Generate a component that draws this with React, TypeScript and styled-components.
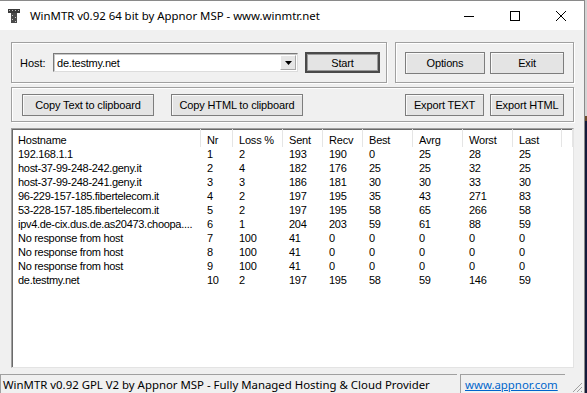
import React from 'react';
import styled, { createGlobalStyle } from 'styled-components';

const GlobalStyle = createGlobalStyle`
  html, body {
    margin: 0;
    padding: 0;
  }
  body {
    width: 587px;
    height: 393px;
    overflow: hidden;
    background: linear-gradient(
      to bottom,
      #d4d4d4 0,
      #d4d4d4 116px,
      #6b4a2a 116px,
      #6b4a2a 121px,
      #141a3a 121px
    );
    font-family: 'Liberation Sans', Arial, sans-serif;
  }
`;

const Window = styled.div`
  width: 585px;
  height: 393px;
  box-sizing: border-box;
  display: flex;
  flex-direction: column;
  background: #f0f0f0;
  border-top: 1px solid #8a8a8a;
  border-right: 1px solid #8a8a8a;
`;

const TitleBar = styled.div`
  flex: 0 0 29px;
  display: flex;
  align-items: center;
  background: #fff;
`;

const AppIcon = styled.svg`
  margin-left: 8px;
  flex: 0 0 auto;
`;

const Title = styled.span`
  flex: 1;
  margin-left: 10px;
  font-family: 'Noto Sans', 'Liberation Sans', sans-serif;
  font-size: 11.4px;
  color: #000;
  white-space: nowrap;
`;

const CaptionButton = styled.div`
  width: 46px;
  height: 29px;
  display: flex;
  align-items: center;
  justify-content: center;
`;

const Client = styled.div`
  flex: 1;
  display: flex;
  flex-direction: column;
  padding: 12px 10px 4px 11px;
  min-height: 0;
`;

const GroupBox = styled.div<{ $width: string; $height: number }>`
  box-sizing: border-box;
  width: ${({ $width }) => $width};
  height: ${({ $height }) => $height}px;
  display: flex;
  align-items: center;
  border: 1px solid #a0a0a0;
  box-shadow: inset 1px 1px 0 #fff, 1px 1px 0 #fff;
`;

const TopRow = styled.div`
  display: flex;
  gap: 8px;
`;

const HostGroup = styled(GroupBox)`
  padding-left: 8px;
`;

const ActionGroup = styled(GroupBox)`
  padding-left: 9px;
  gap: 5px;
`;

const ClipboardGroup = styled(GroupBox)`
  margin-top: 4px;
  padding: 0 9px 0 10px;
`;

const Label = styled.span`
  font-size: 11px;
  color: #000;
  width: 33px;
`;

const Combo = styled.div`
  box-sizing: border-box;
  width: 245px;
  height: 19px;
  display: flex;
  align-items: center;
  background: #fff;
  border: 1px solid #7a7a7a;
  border-right-color: #dcdcdc;
  border-bottom-color: #dcdcdc;
  box-shadow: inset 1px 1px 0 #c8c8c8;
`;

const ComboText = styled.span`
  flex: 1;
  padding-left: 3px;
  font-size: 11px;
  letter-spacing: -0.2px;
  color: #000;
`;

const ComboArrow = styled.div`
  box-sizing: border-box;
  width: 16px;
  height: 15px;
  margin-right: 1px;
  display: flex;
  align-items: center;
  justify-content: center;
  background: #e6e6e6;
  border: 1px solid #a8a8a8;
  border-top-color: #fff;
  border-left-color: #fff;
`;

const Button = styled.div<{ $width: number; $default?: boolean }>`
  box-sizing: border-box;
  width: ${({ $width }) => $width}px;
  height: 22px;
  display: flex;
  align-items: center;
  justify-content: center;
  background: #e4e4e4;
  border: ${({ $default }) => ($default ? '2px solid #4a4a4a' : '1px solid #7d7d7d')};
  box-shadow: ${({ $default }) => ($default ? 'inset 0 0 0 1px #9a9a9a' : 'inset 1px 1px 0 #fafafa')};
  font-size: 11px;
  letter-spacing: -0.15px;
  color: #000;
  white-space: nowrap;
`;

const StartButton = styled(Button)`
  margin-left: 7px;
  height: 21px;
`;

const Spacer = styled.div`
  flex: 1;
`;

const List = styled.div`
  box-sizing: border-box;
  margin-top: 6px;
  flex: 1;
  background: #fff;
  border: 1px solid #a0a0a0;
  border-right-color: #e3e3e3;
  border-bottom-color: #e3e3e3;
  box-shadow: inset 1px 1px 0 #6a6a6a;
  overflow: hidden;
`;

const COLUMNS = '189px 32px 50px 40px 40px 50px 50px 50px 49px 1fr';

const HeaderRow = styled.div`
  display: grid;
  grid-template-columns: ${COLUMNS};
  height: 18px;
`;

const HeaderCell = styled.div`
  box-sizing: border-box;
  display: flex;
  align-items: center;
  padding: 3px 0 0 6px;
  border-right: 1px solid #e5e5e5;
  font-size: 11px;
  letter-spacing: -0.2px;
  color: #000;
`;

const Row = styled.div`
  display: grid;
  grid-template-columns: ${COLUMNS};
  height: 14px;
  line-height: 14px;
`;

const Cell = styled.div`
  padding-left: 6px;
  font-size: 11px;
  letter-spacing: -0.3px;
  color: #000;
  white-space: nowrap;
  overflow: hidden;
`;

const StatusBar = styled.div`
  flex: 0 0 21px;
  display: flex;
  align-items: flex-end;
`;

const Pane = styled.div<{ $width: number }>`
  box-sizing: border-box;
  width: ${({ $width }) => $width}px;
  height: 19px;
  margin-right: 3px;
  padding-left: 2px;
  display: flex;
  align-items: center;
  border-top: 1px solid #a0a0a0;
  border-left: 1px solid #a0a0a0;
  font-family: 'Noto Sans', 'Liberation Sans', sans-serif;
  font-size: 11.4px;
  color: #000;
  white-space: nowrap;
  overflow: hidden;
`;

const Link = styled.span`
  padding-left: 2px;
  color: #0066cc;
  text-decoration: underline;
`;

const Grip = styled.svg`
  margin-left: auto;
  margin-right: 1px;
`;

const headers = ['Hostname', 'Nr', 'Loss %', 'Sent', 'Recv', 'Best', 'Avrg', 'Worst', 'Last'];

const hops: string[][] = [
  ['192.168.1.1', '1', '2', '193', '190', '0', '25', '28', '25'],
  ['host-37-99-248-242.geny.it', '2', '4', '182', '176', '25', '25', '32', '25'],
  ['host-37-99-248-241.geny.it', '3', '3', '186', '181', '30', '30', '33', '30'],
  ['96-229-157-185.fibertelecom.it', '4', '2', '197', '195', '35', '43', '271', '83'],
  ['53-228-157-185.fibertelecom.it', '5', '2', '197', '195', '58', '65', '266', '58'],
  ['ipv4.de-cix.dus.de.as20473.choopa....', '6', '1', '204', '203', '59', '61', '88', '59'],
  ['No response from host', '7', '100', '41', '0', '0', '0', '0', '0'],
  ['No response from host', '8', '100', '41', '0', '0', '0', '0', '0'],
  ['No response from host', '9', '100', '41', '0', '0', '0', '0', '0'],
  ['de.testmy.net', '10', '2', '197', '195', '58', '59', '146', '59'],
];

const App: React.FC = () => (
  <>
    <GlobalStyle />
    <Window>
      <TitleBar>
        <AppIcon width="12" height="14" viewBox="0 0 12 14">
          <rect x="0" y="0" width="12" height="4" fill="#3a3a3a" />
          <rect x="1" y="1" width="1" height="1" fill="#bdbdbd" />
          <rect x="4" y="1" width="1" height="1" fill="#bdbdbd" />
          <rect x="7" y="1" width="1" height="1" fill="#bdbdbd" />
          <rect x="10" y="1" width="1" height="1" fill="#bdbdbd" />
          <rect x="3" y="4" width="6" height="10" fill="#4a4a4a" />
          <rect x="4" y="6" width="1" height="1" fill="#c8c8c8" />
          <rect x="7" y="8" width="1" height="1" fill="#c8c8c8" />
          <rect x="4" y="10" width="1" height="1" fill="#c8c8c8" />
          <rect x="7" y="12" width="1" height="1" fill="#c8c8c8" />
        </AppIcon>
        <Title>WinMTR v0.92 64 bit by Appnor MSP - www.winmtr.net</Title>
        <CaptionButton>
          <svg width="10" height="10" viewBox="0 0 10 10">
            <line x1="0" y1="5.5" x2="10" y2="5.5" stroke="#000" strokeWidth="1" />
          </svg>
        </CaptionButton>
        <CaptionButton>
          <svg width="10" height="10" viewBox="0 0 10 10">
            <rect x="0.5" y="0.5" width="9" height="9" fill="none" stroke="#000" strokeWidth="1" />
          </svg>
        </CaptionButton>
        <CaptionButton>
          <svg width="10" height="10" viewBox="0 0 10 10">
            <path d="M0 0 L10 10 M10 0 L0 10" stroke="#000" strokeWidth="1" />
          </svg>
        </CaptionButton>
      </TitleBar>

      <Client>
        <TopRow>
          <HostGroup $width="376px" $height={41}>
            <Label>Host:</Label>
            <Combo>
              <ComboText>de.testmy.net</ComboText>
              <ComboArrow>
                <svg width="7" height="4" viewBox="0 0 7 4">
                  <path d="M0 0 H7 L3.5 4 Z" fill="#000" />
                </svg>
              </ComboArrow>
            </Combo>
            <StartButton $width={75} $default>
              Start
            </StartButton>
          </HostGroup>
          <ActionGroup $width="179px" $height={41}>
            <Button $width={80}>Options</Button>
            <Button $width={74}>Exit</Button>
          </ActionGroup>
        </TopRow>

        <ClipboardGroup $width="563px" $height={35}>
          <Button $width={132}>Copy Text to clipboard</Button>
          <Button $width={132} style={{ marginLeft: 17 }}>
            Copy HTML to clipboard
          </Button>
          <Spacer />
          <Button $width={79}>Export TEXT</Button>
          <Button $width={74} style={{ marginLeft: 6 }}>
            Export HTML
          </Button>
        </ClipboardGroup>

        <List>
          <HeaderRow>
            {headers.map((h) => (
              <HeaderCell key={h}>{h}</HeaderCell>
            ))}
            <HeaderCell />
          </HeaderRow>
          {hops.map((hop) => (
            <Row key={hop[1]}>
              {hop.map((v, i) => (
                <Cell key={i}>{v}</Cell>
              ))}
            </Row>
          ))}
        </List>
      </Client>

      <StatusBar>
        <Pane $width={457}>WinMTR v0.92 GPL V2 by Appnor MSP - Fully Managed Hosting &amp; Cloud Provider</Pane>
        <Pane $width={105}>
          <Link>www.appnor.com</Link>
        </Pane>
        <Grip width="12" height="12" viewBox="0 0 12 12">
          <path d="M11 2 L2 11 M11 6 L6 11 M11 10 L10 11" stroke="#a0a0a0" strokeWidth="1" />
        </Grip>
      </StatusBar>
    </Window>
  </>
);

export default App;
